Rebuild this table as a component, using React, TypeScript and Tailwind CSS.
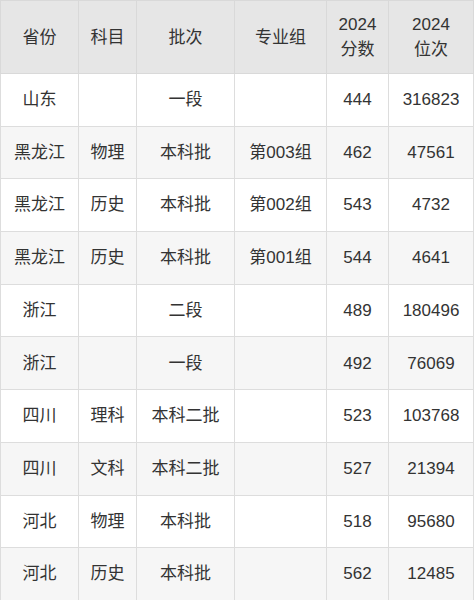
const headers: string[][] = [
  ["省份"],
  ["科目"],
  ["批次"],
  ["专业组"],
  ["2024", "分数"],
  ["2024", "位次"],
];

const widths = ["w-[78px]", "w-[58px]", "w-[98px]", "w-[92px]", "w-[62px]", "w-[85px]"];

const rows: string[][] = [
  ["山东", "", "一段", "", "444", "316823"],
  ["黑龙江", "物理", "本科批", "第003组", "462", "47561"],
  ["黑龙江", "历史", "本科批", "第002组", "543", "4732"],
  ["黑龙江", "历史", "本科批", "第001组", "544", "4641"],
  ["浙江", "", "二段", "", "489", "180496"],
  ["浙江", "", "一段", "", "492", "76069"],
  ["四川", "理科", "本科二批", "", "523", "103768"],
  ["四川", "文科", "本科二批", "", "527", "21394"],
  ["河北", "物理", "本科批", "", "518", "95680"],
  ["河北", "历史", "本科批", "", "562", "12485"],
];

export default function App() {
  return (
    <div className="w-[474px] h-[600px] overflow-hidden bg-white font-['Liberation_Sans','Noto_Sans_CJK_SC',sans-serif] text-[17px] text-[#333333]">
      <table className="w-[473px] table-fixed border-collapse">
        <thead>
          <tr className="h-[73px] bg-[#e6e6e6]">
            {headers.map((h, i) => (
              <th key={i} className={`${widths[i]} border border-[#d9d9d9] font-normal text-center align-middle leading-[25px] p-0`}>
                {h.map((line, j) => (
                  <div key={j}>{line}</div>
                ))}
              </th>
            ))}
          </tr>
        </thead>
        <tbody>
          {rows.map((r, i) => (
            <tr key={i} className={`h-[52.7px] ${i % 2 === 1 ? "bg-[#f6f6f6]" : "bg-white"}`}>
              {r.map((c, j) => (
                <td key={j} className="border border-[#dddddd] text-center align-middle p-0 whitespace-nowrap">
                  {c}
                </td>
              ))}
            </tr>
          ))}
        </tbody>
      </table>
    </div>
  );
}
